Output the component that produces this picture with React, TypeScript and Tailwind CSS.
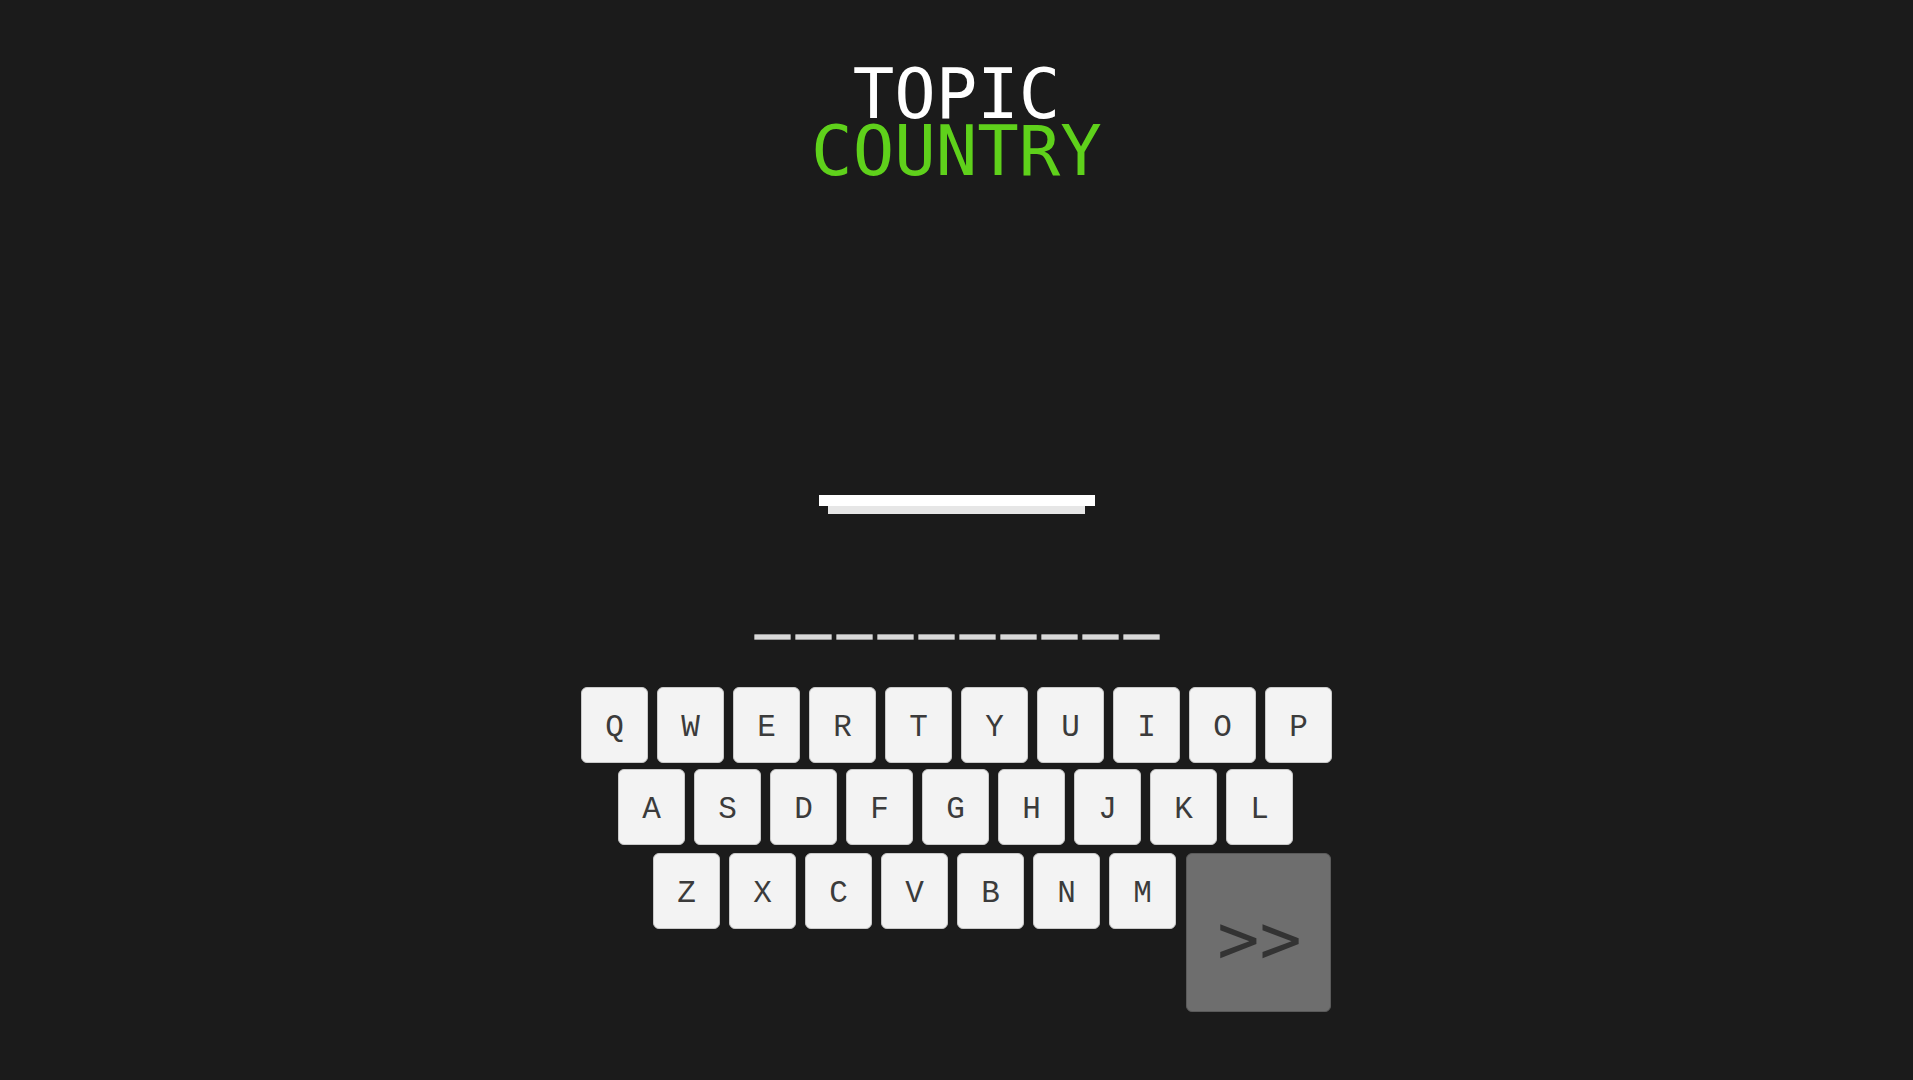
import React from 'react';

const rows = ['QWERTYUIOP', 'ASDFGHJKL', 'ZXCVBNM'];
const WORD_LENGTH = 10;

function Key({ letter }: { letter: string }) {
  return (
    <button
      type="button"
      className="w-[67px] h-[76px] shrink-0 rounded-[6px] bg-[#f3f3f3] border border-[#c9c9c9] flex items-center justify-center pt-[6px] text-[31px] text-[#3b3b3b] font-['Liberation_Mono',monospace]"
    >
      {letter}
    </button>
  );
}

export default function App() {
  return (
    <div className="min-h-screen w-full bg-[#1b1b1b] flex flex-col items-center font-['DejaVu_Sans_Mono',monospace]">
      {/* topic heading */}
      <div className="mt-[66px] flex flex-col items-center text-[69px]">
        <div className="h-[57px] leading-[57px] text-white">TOPIC</div>
        <div className="h-[57px] leading-[57px] text-[#5fd11b]">COUNTRY</div>
      </div>

      {/* gallows base */}
      <div className="mt-[315px] flex flex-col items-center">
        <div className="w-[276px] h-[11px] bg-white" />
        <div className="w-[257px] h-[8px] bg-[#e6e6e6]" />
      </div>

      {/* letter slots */}
      <div className="mt-[120px] flex gap-[4px]">
        {Array.from({ length: WORD_LENGTH }).map((_, i) => (
          <div key={i} className="w-[37px] h-[6px] rounded-[1px] bg-[#d9d9d9] border border-[#9a9a9a]" />
        ))}
      </div>

      {/* keyboard */}
      <div className="mt-[47px] w-[751px] flex flex-col">
        <div className="flex gap-[9px]">
          {rows[0].split('').map((l) => (
            <Key key={l} letter={l} />
          ))}
        </div>
        <div className="mt-[6px] pl-[37px] flex gap-[9px]">
          {rows[1].split('').map((l) => (
            <Key key={l} letter={l} />
          ))}
        </div>
        <div className="mt-[8px] pl-[72px] flex items-start gap-[9px]">
          {rows[2].split('').map((l) => (
            <Key key={l} letter={l} />
          ))}
          <button
            type="button"
            className="ml-[1px] w-[145px] h-[159px] rounded-[6px] bg-[#6e6e6e] border border-[#5a5a5a] flex items-center justify-center pt-[12px] pl-[2px] text-[70px] leading-none text-[#333333] font-['DejaVu_Sans_Mono',monospace]"
          >
            &gt;&gt;
          </button>
        </div>
      </div>
    </div>
  );
}
